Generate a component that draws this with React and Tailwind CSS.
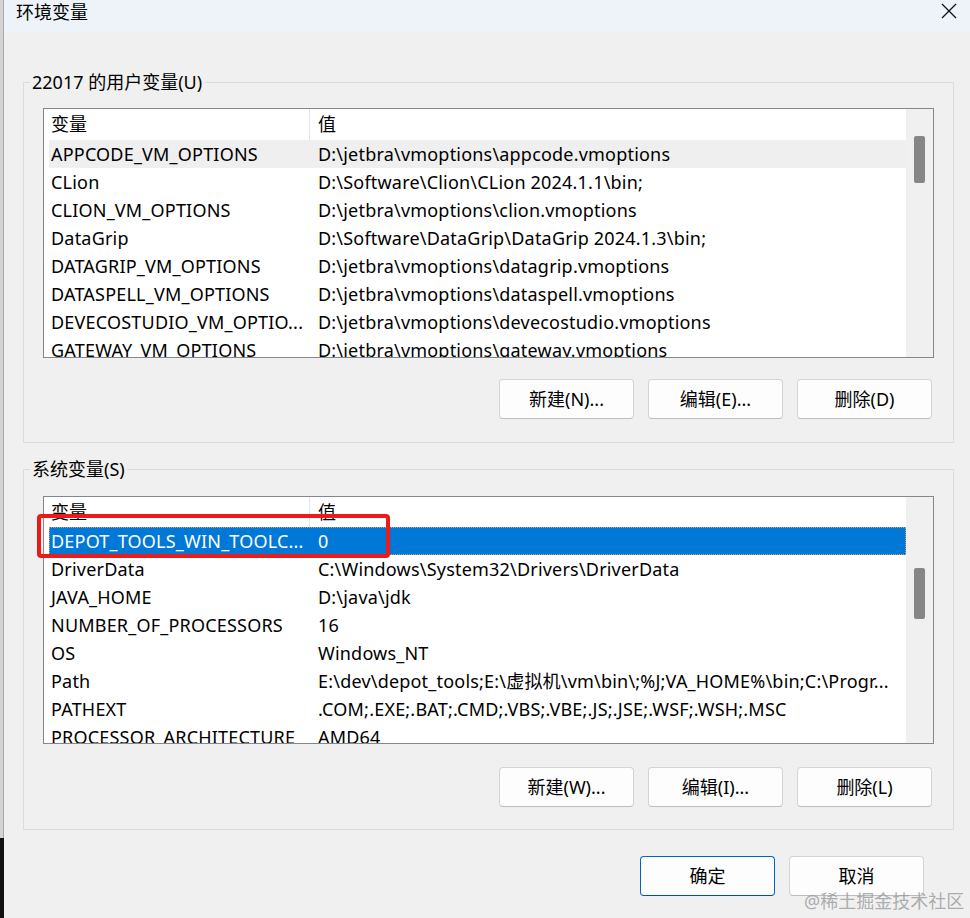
import React from "react";

const userVars = [
  ["APPCODE_VM_OPTIONS", "D:\\jetbra\\vmoptions\\appcode.vmoptions"],
  ["CLion", "D:\\Software\\Clion\\CLion 2024.1.1\\bin;"],
  ["CLION_VM_OPTIONS", "D:\\jetbra\\vmoptions\\clion.vmoptions"],
  ["DataGrip", "D:\\Software\\DataGrip\\DataGrip 2024.1.3\\bin;"],
  ["DATAGRIP_VM_OPTIONS", "D:\\jetbra\\vmoptions\\datagrip.vmoptions"],
  ["DATASPELL_VM_OPTIONS", "D:\\jetbra\\vmoptions\\dataspell.vmoptions"],
  ["DEVECOSTUDIO_VM_OPTIO...", "D:\\jetbra\\vmoptions\\devecostudio.vmoptions"],
  ["GATEWAY_VM_OPTIONS", "D:\\jetbra\\vmoptions\\gateway.vmoptions"],
];

const sysVars = [
  ["DEPOT_TOOLS_WIN_TOOLC...", "0"],
  ["DriverData", "C:\\Windows\\System32\\Drivers\\DriverData"],
  ["JAVA_HOME", "D:\\java\\jdk"],
  ["NUMBER_OF_PROCESSORS", "16"],
  ["OS", "Windows_NT"],
  ["Path", "E:\\dev\\depot_tools;E:\\虚拟机\\vm\\bin\\;%J;VA_HOME%\\bin;C:\\Progr..."],
  ["PATHEXT", ".COM;.EXE;.BAT;.CMD;.VBS;.VBE;.JS;.JSE;.WSF;.WSH;.MSC"],
  ["PROCESSOR_ARCHITECTURE", "AMD64"],
];

function Btn({ children, primary }) {
  return (
    <div
      className={
        "flex h-[40px] w-[135px] items-center justify-center rounded-[4px] border bg-[#fdfdfd] text-[18px] leading-none text-black " +
        (primary ? "border-[#0067c0] border-b-[#00509a]" : "border-[#d4d4d4] border-b-[#bdbdbd]")
      }
    >
      {children}
    </div>
  );
}

function VarList({ rows, hClass, headClass, thumbClass, mode }) {
  return (
    <div className={"flex w-[891px] overflow-hidden border border-[#828790] bg-white " + hClass}>
      <div className="flex-1 overflow-hidden">
        <div className={"flex items-stretch pl-[5px] text-[18px] " + headClass}>
          <div className="flex w-[261px] items-center border-r border-[#e5e5e5] pl-[2px]">变量</div>
          <div className="flex items-center pl-[8px]">值</div>
        </div>
        {rows.map((r, i) => {
          const sel = i === 0 && mode === "sel";
          const hov = i === 0 && mode === "hover";
          return (
            <div
              key={i}
              className={
                "ml-[5px] flex h-[28px] items-center whitespace-nowrap text-[18px] leading-[28px] tracking-[0.2px] " +
                (sel
                  ? "bg-[#0078d7] text-white outline outline-1 -outline-offset-1 outline-dotted outline-[#d9a25a]"
                  : hov
                  ? "bg-[#efefef] text-black"
                  : "text-black")
              }
            >
              <div className="w-[261px] shrink-0 pl-[2px]">{r[0]}</div>
              <div className="pl-[8px]">{r[1]}</div>
            </div>
          );
        })}
      </div>
      <div className="w-[27px] shrink-0 bg-[#f0f0f0]">
        <div className={"ml-[8px] w-[11px] rounded-[2px] bg-[#868686] " + thumbClass} />
      </div>
    </div>
  );
}

export default function App() {
  return (
    <div className="relative flex h-[918px] w-[970px] overflow-hidden bg-[#f0f0f0] font-['Noto_Sans','Noto_Sans_CJK_SC',sans-serif] text-black">
      <div className="flex w-[4px] shrink-0 flex-col">
        <div className="h-[838px] border-r border-[#a9a9a9] bg-[#d3d3d3]" />
        <div className="flex-1 bg-[#111]" />
      </div>
      <div className="flex flex-1 flex-col">
        <div className="flex h-[33px] items-start justify-between bg-[#eef3fa] pl-[12px] pr-[13px]">
          <span className="pt-[1px] text-[18px] leading-[22px]">环境变量</span>
          <svg width="16" height="16" viewBox="0 0 16 16" className="mt-[3px]">
            <path d="M1 1 L15 15 M15 1 L1 15" stroke="#111" strokeWidth="1.3" fill="none" />
          </svg>
        </div>

        <fieldset className="ml-[19px] mr-[16px] mt-[37px] border border-[#dcdcdc] p-0">
          <legend className="ml-[6px] px-[2px] text-[18px] leading-[24px]">22017 的用户变量(U)</legend>
          <div className="px-[19px] pb-[23px] pt-[14px]">
            <VarList
              rows={userVars}
              hClass="h-[250px]"
              headClass="h-[31px]"
              thumbClass="mt-[27px] h-[47px]"
              mode="hover"
            />
            <div className="mt-[21px] flex justify-end gap-[14px] pr-[2px]">
              <Btn>新建(N)...</Btn>
              <Btn>编辑(E)...</Btn>
              <Btn>删除(D)</Btn>
            </div>
          </div>
        </fieldset>

        <fieldset className="ml-[19px] mr-[16px] mt-[14px] border border-[#dcdcdc] p-0">
          <legend className="ml-[6px] px-[2px] text-[18px] leading-[24px]">系统变量(S)</legend>
          <div className="px-[19px] pb-[22px] pt-[15px]">
            <VarList
              rows={sysVars}
              hClass="h-[248px]"
              headClass="h-[30px]"
              thumbClass="mt-[71px] h-[51px]"
              mode="sel"
            />
            <div className="mt-[23px] flex justify-end gap-[14px] pr-[2px]">
              <Btn>新建(W)...</Btn>
              <Btn>编辑(I)...</Btn>
              <Btn>删除(L)</Btn>
            </div>
          </div>
        </fieldset>

        <div className="mt-[26px] flex justify-end gap-[14px] pr-[46px]">
          <Btn primary>确定</Btn>
          <Btn>取消</Btn>
        </div>
      </div>

      <div className="pointer-events-none absolute left-[37px] top-[514px] h-[44px] w-[353px] rounded-[4px] border-[4px] border-[#ee1a1a]" />
      <div className="pointer-events-none absolute left-[804px] top-[889px] text-[18px] leading-[24px] text-[#9a9a9a]/80">
        @稀土掘金技术社区
      </div>
    </div>
  );
}
